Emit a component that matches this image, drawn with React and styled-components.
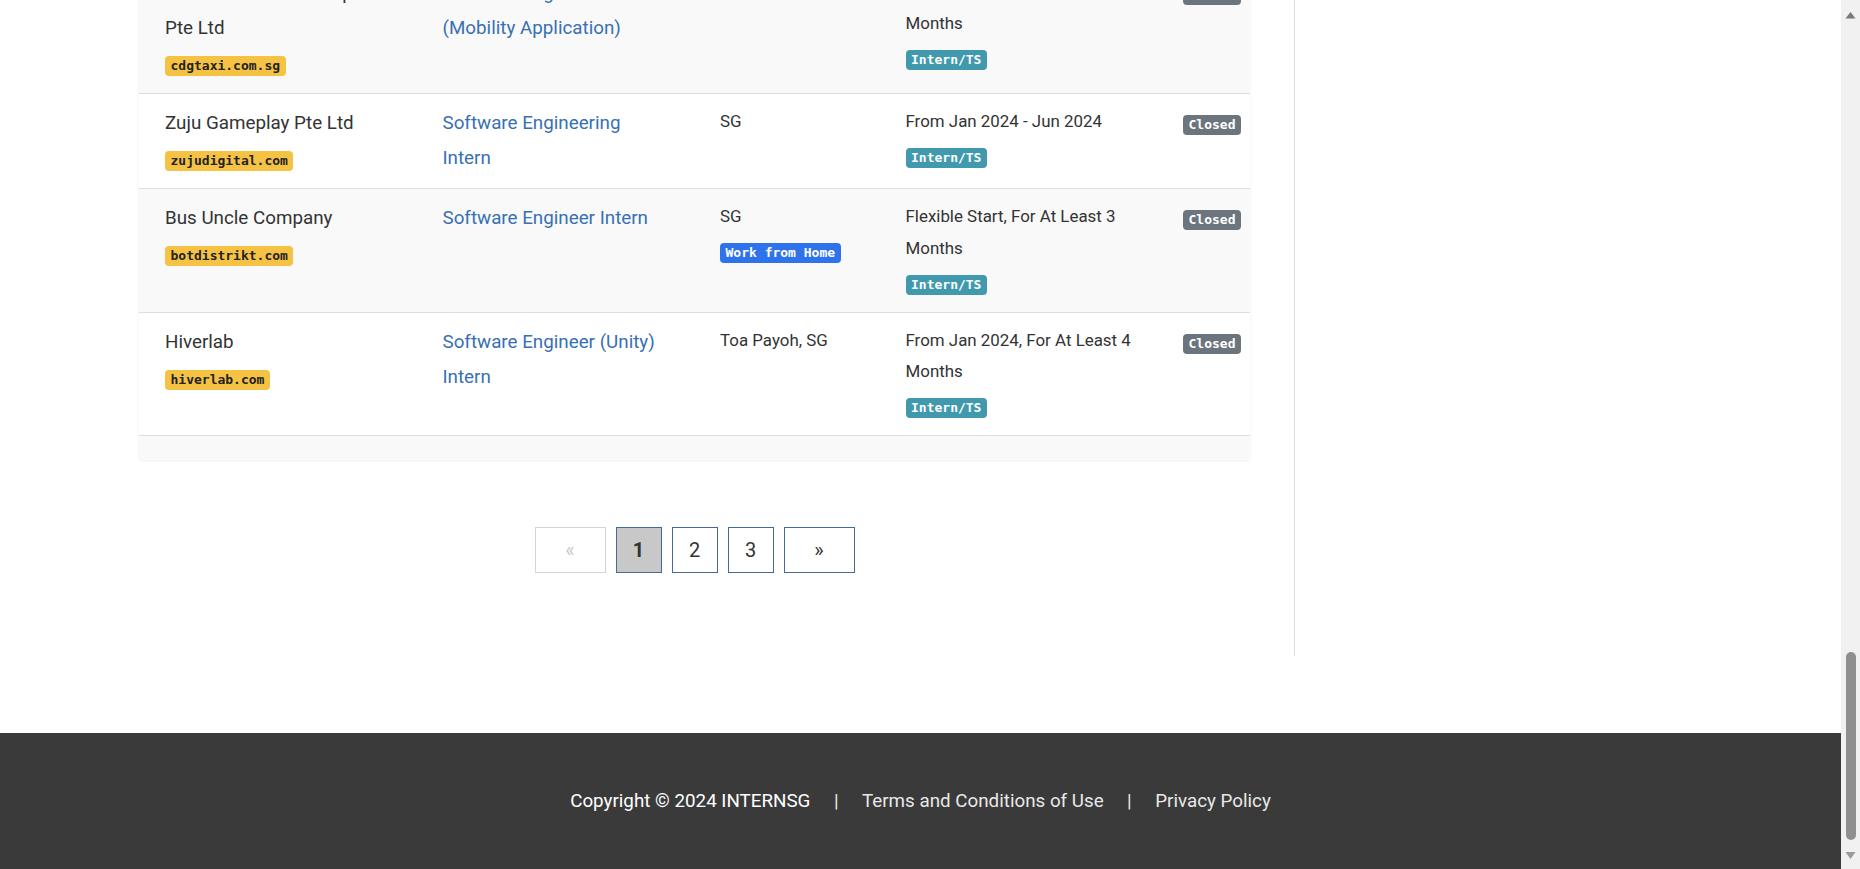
import React from 'react'
import styled, { createGlobalStyle } from 'styled-components'

const GlobalStyle = createGlobalStyle`
html, body {
  margin: 0;
  padding: 0;
  overflow: hidden;
}
body {
  font-family: Roboto, "Liberation Sans", sans-serif;
  color: #333;
  background: #fff;
}
`

const Viewport = styled.div`
display: flex;
height: 100vh;
overflow: hidden;
`

const Page = styled.div`
flex: 1;
min-width: 0;
display: flex;
flex-direction: column;
justify-content: flex-end;
overflow: hidden;
`

const Layout = styled.div`
flex-shrink: 0;
display: flex;
padding-left: 139px;
`

const Main = styled.div`
width: 1111px;
padding-bottom: 83px;
`

const Sidebar = styled.aside`
flex: 1;
margin-left: 44px;
border-left: 1px solid #ddd;
`

const Card = styled.div`
background: #f9f9f9;
border-radius: 4px;
box-shadow: 0 1px 3px rgba(0, 0, 0, 0.07);
padding-bottom: 24px;
`

const Row = styled.div`
display: grid;
grid-template-columns: 277.5px 277.5px 185.5px 277.5px 1fr;
padding-left: 14px;
border-bottom: 1px solid #dedede;
background: ${p => (p.$plain ? '#fff' : '#f9f9f9')};
`

const Cell = styled.div`
padding: 12px ${p => (p.$last ? '0' : p.$narrow ? '46px' : '12px')} 12px 12px;
`

const Name = styled.div`
font-size: 18.8px;
line-height: 35px;
color: #333;
white-space: pre-line;
`

const Title = styled.a`
display: block;
font-size: 18.8px;
line-height: 35px;
color: #3870b3;
text-decoration: none;
`

const Info = styled.div`
font-size: 16.9px;
line-height: 31.75px;
color: #333;
`

const BadgeRow = styled.div`
display: flex;
margin: ${p => (p.$top ? '9px 0 0' : '10px 0 5px')};
`

const badgeColors = {
  site: ['#f5c244', '#222'],
  remote: ['#2f73ec', '#fff'],
  type: ['#4199ae', '#fff'],
  closed: ['#6c757d', '#fff'],
}

const Badge = styled.span`
display: inline-block;
height: 20px;
line-height: 20px;
padding: 0 5.5px;
border-radius: 4px;
font-family: "DejaVu Sans Mono", "Liberation Mono", monospace;
font-weight: 700;
font-size: 13px;
background: ${p => badgeColors[p.$kind][0]};
color: ${p => badgeColors[p.$kind][1]};
`

const Pager = styled.nav`
display: flex;
justify-content: center;
gap: 10px;
margin-top: 67px;
`

const PageButton = styled.a`
box-sizing: border-box;
display: flex;
align-items: center;
justify-content: center;
width: ${p => (p.$wide ? '71px' : '46px')};
height: 46px;
border: 1px solid ${p => (p.$disabled ? '#d4d4d4' : '#46699a')};
background: ${p => (p.$active ? '#c8c8c8' : '#fff')};
color: ${p => (p.$disabled ? '#c8c8c8' : '#333')};
font-size: 20px;
font-weight: ${p => (p.$active ? 700 : 400)};
text-decoration: none;
`

const Footer = styled.footer`
flex-shrink: 0;
margin-top: 77px;
height: 136px;
background: #3a3a3a;
display: flex;
align-items: center;
justify-content: center;
font-size: 18.8px;
color: #fff;
`

const FooterLink = styled.a`
color: #e8e8e8;
text-decoration: none;
`

const Sep = styled.span`
padding: 0 23.5px;
color: #e8e8e8;
`

const Scrollbar = styled.div`
width: 19px;
flex-shrink: 0;
background: #f1f1f1;
display: flex;
flex-direction: column;
align-items: center;
`

const Track = styled.div`
flex: 1;
`

const Thumb = styled.div`
width: 10px;
height: 188px;
border-radius: 5px;
background: #8f8f8f;
`

const jobs = [
  {
    company: 'ComfortDelGro Transport\nPte Ltd',
    site: 'cdgtaxi.com.sg',
    title: 'Software Engineer Intern (Mobility Application)',
    place: 'Bishan, SG',
    period: 'Flexible Start, For At Least 6 Months',
  },
  {
    company: 'Zuju Gameplay Pte Ltd',
    site: 'zujudigital.com',
    title: 'Software Engineering Intern',
    place: 'SG',
    period: 'From Jan 2024 - Jun 2024',
  },
  {
    company: 'Bus Uncle Company',
    site: 'botdistrikt.com',
    title: 'Software Engineer Intern',
    place: 'SG',
    remote: true,
    period: 'Flexible Start, For At Least 3 Months',
  },
  {
    company: 'Hiverlab',
    site: 'hiverlab.com',
    title: 'Software Engineer (Unity) Intern',
    place: 'Toa Payoh, SG',
    period: 'From Jan 2024, For At Least 4 Months',
  },
]

const App = () => {
  return (
    <>
      <GlobalStyle />
      <Viewport>
        <Page>
          <Layout>
            <Main>
              <Card>
                {jobs.map((job, i) => (
                  <Row key={job.site} $plain={i % 2 === 1}>
                    <Cell>
                      <Name>{job.company}</Name>
                      <BadgeRow>
                        <Badge $kind="site">{job.site}</Badge>
                      </BadgeRow>
                    </Cell>
                    <Cell $narrow>
                      <Title href="#">{job.title}</Title>
                    </Cell>
                    <Cell>
                      <Info>{job.place}</Info>
                      {job.remote && (
                        <BadgeRow>
                          <Badge $kind="remote">Work from Home</Badge>
                        </BadgeRow>
                      )}
                    </Cell>
                    <Cell>
                      <Info>{job.period}</Info>
                      <BadgeRow>
                        <Badge $kind="type">Intern/TS</Badge>
                      </BadgeRow>
                    </Cell>
                    <Cell $last>
                      <BadgeRow $top>
                        <Badge $kind="closed">Closed</Badge>
                      </BadgeRow>
                    </Cell>
                  </Row>
                ))}
              </Card>

              <Pager>
                <PageButton $wide $disabled>«</PageButton>
                <PageButton $active>1</PageButton>
                <PageButton href="#">2</PageButton>
                <PageButton href="#">3</PageButton>
                <PageButton $wide href="#">»</PageButton>
              </Pager>
            </Main>
            <Sidebar />
          </Layout>

          <Footer>
            <span>Copyright © 2024 INTERNSG</span>
            <Sep>|</Sep>
            <FooterLink href="#">Terms and Conditions of Use</FooterLink>
            <Sep>|</Sep>
            <FooterLink href="#">Privacy Policy</FooterLink>
          </Footer>
        </Page>

        <Scrollbar>
          <svg width="19" height="30" viewBox="0 0 19 30">
            <path d="M4.5 18.5 L14.5 18.5 L9.5 12 Z" fill="#787878" />
          </svg>
          <Track />
          <Thumb />
          <svg width="19" height="29" viewBox="0 0 19 29">
            <path d="M4.5 12 L14.5 12 L9.5 19 Z" fill="#9a9a9a" />
          </svg>
        </Scrollbar>
      </Viewport>
    </>
  )
}

export default App
